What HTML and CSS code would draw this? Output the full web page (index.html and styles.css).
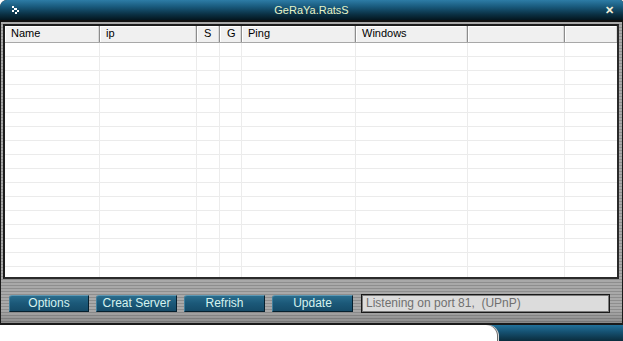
FILE: index.html
```html
<!DOCTYPE html>
<html>

<head>
    <meta charset="utf-8">
    <title>GeRaYa.RatsS</title>
    <link rel="stylesheet" href="styles.css">
</head>

<body>
    <div class="window">
        <div class="titlebar">
            <span class="app-icon">
                <svg width="11" height="11" viewBox="0 0 11 11">
                    <path d="M1 1h2v2h2v2h-2v2h-2v-2h2v-2h-2z" fill="#fff"/>
                    <path d="M4 3h2v2h2v2h-2v2h-2v-2h2v-2h-2z" fill="#fff"/>
                </svg>
            </span>
            <span class="title">GeRaYa.RatsS</span>
            <span class="close">✕</span>
        </div>
        <div class="frame">
            <div class="list">
                <div class="head">
                    <div class="c1">Name</div>
                    <div class="c2">ip</div>
                    <div class="c3">S</div>
                    <div class="c4">G</div>
                    <div class="c5">Ping</div>
                    <div class="c6">Windows</div>
                    <div class="c7"></div>
                    <div class="c8"></div>
                </div>
                <div class="rows">
                    <div class="c1"></div>
                    <div class="c2"></div>
                    <div class="c3"></div>
                    <div class="c4"></div>
                    <div class="c5"></div>
                    <div class="c6"></div>
                    <div class="c7"></div>
                    <div class="c8"></div>
                </div>
            </div>
            <div class="toolbar">
                <button class="btn w80">Options</button>
                <button class="btn">Creat Server</button>
                <button class="btn">Refrish</button>
                <button class="btn">Update</button>
                <div class="status">Listening on port 81,&nbsp; (UPnP)</div>
            </div>
        </div>
    </div>
    <div class="footer">
        <div class="desk"></div>
        <div class="tab"></div>
    </div>
</body>

</html>
```

FILE: styles.css
```css
html,
body {
    margin: 0;
    padding: 0;
}

body {
    width: 623px;
    height: 341px;
    overflow: hidden;
    background-color: #fff;
    font-family: "Liberation Sans", Arial, sans-serif;
    font-size: 11px;
}

.window {
    width: 623px;
    height: 325px;
    box-sizing: border-box;
    display: flex;
    flex-direction: column;
    border-radius: 7px 3px 0 0;
    overflow: hidden;
    background-color: #1a1a1a;
}

.titlebar {
    height: 20px;
    flex: none;
    display: flex;
    align-items: center;
    background: linear-gradient(to bottom, #2d7ca6 0%, #18587a 35%, #0b3246 70%, #04161f 100%);
    border-bottom: 2px solid #111;
    color: #e6f4c8;
}

.app-icon {
    width: 24px;
    display: flex;
    justify-content: center;
    padding-left: 4px;
    padding-top: 1px;
}

.title {
    flex: 1;
    text-align: center;
    font-size: 11px;
}

.close {
    width: 28px;
    text-align: center;
    font-size: 11px;
    font-weight: bold;
    color: #f4f0d8;
}

.frame {
    flex: 1;
    display: flex;
    flex-direction: column;
    margin: 0 1px 2px 1px;
    padding: 2px 3px 0 2px;
    background: repeating-linear-gradient(to bottom, #a9a9a9 0 2px, #8e8e8e 2px 3px);
}

.list {
    height: 255px;
    box-sizing: border-box;
    border: 2px solid #1c1c1c;
    border-right-color: #2a2a2a;
    border-bottom-color: #2a2a2a;
    background-color: #fff;
    display: flex;
    flex-direction: column;
}

.c1 { width: 95px; }
.c2 { width: 97px; }
.c3 { width: 23px; }
.c4 { width: 22px; }
.c5 { width: 114px; }
.c6 { width: 112px; }
.c7 { width: 97px; }
.c8 { flex: 1; }

.head {
    display: flex;
    height: 16px;
    flex: none;
    background-color: #f0f0f0;
    border-bottom: 1px solid #a8a8a8;
}

.head div {
    box-sizing: border-box;
    height: 16px;
    line-height: 15px;
    padding-left: 6px;
    border-right: 1px solid #8c8c8c;
    box-shadow: inset -1px 0 0 #d8d8d8, inset 1px 1px 0 #fff;
    color: #000;
}

.head div.c3,
.head div.c4 {
    padding-left: 7px;
}

.head div.c8 {
    border-right: none;
}

.rows {
    flex: 1;
    display: flex;
    background: repeating-linear-gradient(to bottom, #fff 0 13px, #ebebeb 13px 14px);
}

.rows div {
    box-sizing: border-box;
    border-right: 1px solid #ececec;
}

.rows div.c8 {
    border-right: none;
}

.toolbar {
    flex: 1;
    display: flex;
    align-items: flex-start;
    gap: 7px;
    padding: 16px 0 0 7px;
    background: linear-gradient(to bottom, rgba(0, 0, 0, 0) 70%, rgba(0, 0, 0, 0.18) 100%);
    margin: 0 -3px 0 -2px;
}

.btn {
    width: 81px;
    height: 17px;
    margin: 0;
    padding: 0;
    border: 1px solid;
    border-color: #5d98b4 #06202e #06202e #3f7e9c;
    border-radius: 3px 0 0 0;
    background: linear-gradient(to bottom, #2a6d8d 0%, #1b5878 50%, #154b68 100%);
    color: #d6f2ee;
    font-family: "Liberation Sans", Arial, sans-serif;
    font-size: 12px;
    line-height: 15px;
}

.btn.w80 {
    width: 80px;
    margin-left: 1px;
}

.status {
    width: 249px;
    height: 19px;
    margin-top: -1px;
    margin-left: 1px;
    box-sizing: border-box;
    border: 1px solid #1a1a1a;
    box-shadow: inset 0 0 0 1px #7c7c7c;
    background-color: #dcdcdc;
    color: #707070;
    font-size: 12px;
    line-height: 17px;
    padding-left: 4px;
    white-space: nowrap;
}

.footer {
    height: 16px;
    display: flex;
    background: linear-gradient(to bottom, #22719a 0%, #155070 45%, #0a2c3d 100%);
}

.desk {
    width: 497px;
    background-color: #fff;
    border-top-right-radius: 11px;
    box-shadow: 1px 0 0 #6c6c6c, 2px 0 0 #d8d8d8;
}

.tab {
    flex: 1;
}
```
